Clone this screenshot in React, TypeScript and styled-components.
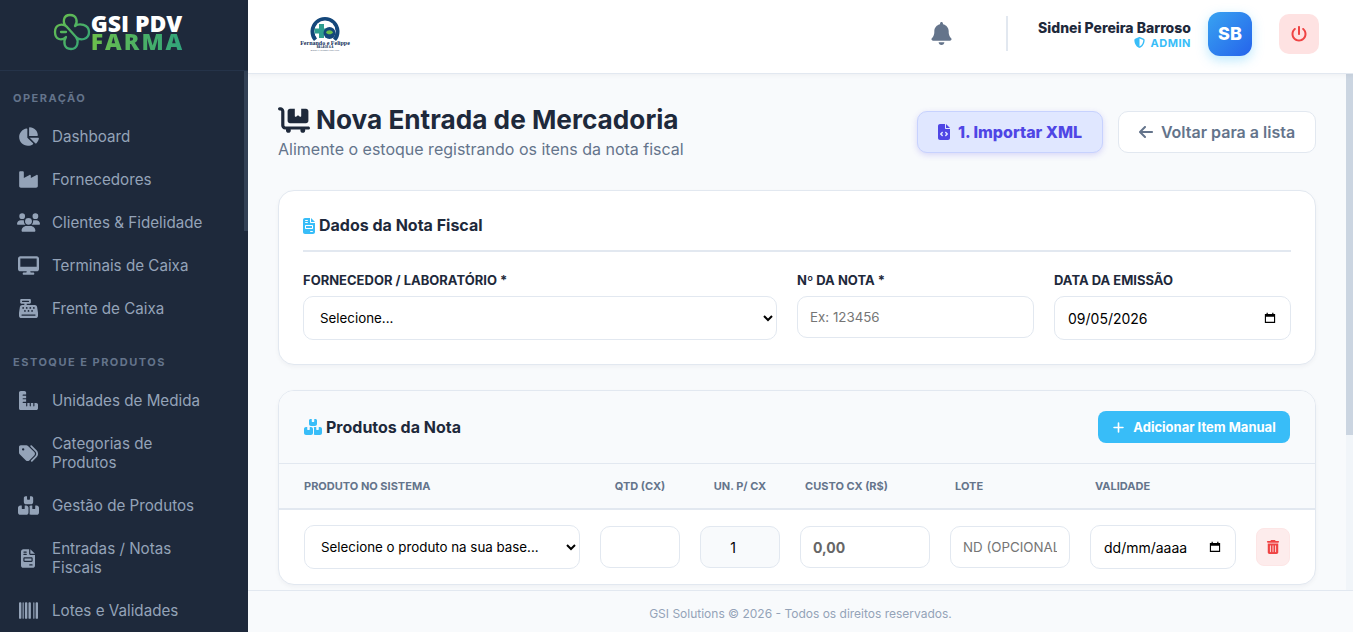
import React, { FC, ReactNode } from 'react'
import styled, { createGlobalStyle } from 'styled-components'
import {
	FaArrowLeft,
	FaBarcode,
	FaBell,
	FaBoxesStacked,
	FaCartFlatbed,
	FaCashRegister,
	FaChartPie,
	FaDesktop,
	FaFileCode,
	FaFileInvoice,
	FaIndustry,
	FaPlus,
	FaPowerOff,
	FaRulerCombined,
	FaShieldHalved,
	FaTags,
	FaTrashCan,
	FaUsers,
} from 'react-icons/fa6'

const GlobalStyle = createGlobalStyle`
	* { box-sizing: border-box; }
	html, body, #root { height: 100%; margin: 0; }
	body {
		font-family: 'Inter', 'Liberation Sans', sans-serif;
		background: #f8fafc;
		color: #1e293b;
		overflow: hidden;
	}
`

const Shell = styled.div`
	display: flex;
	height: 632px;
`

const Sidebar = styled.aside`
	width: 248px;
	flex-shrink: 0;
	background: #1e293b;
	display: flex;
	flex-direction: column;
`

const Brand = styled.div`
	height: 71px;
	flex-shrink: 0;
	border-bottom: 1px solid #253349;
	display: flex;
	align-items: center;
	justify-content: center;
	padding: 0 13px 6px 0;
`

const BrandText = styled.div`
	display: flex;
	flex-direction: column;
	align-items: flex-end;
	font-family: 'Open Sans', 'Inter', sans-serif;
	font-weight: 800;
	font-size: 23px;
	line-height: 18px;
	white-space: nowrap;
`

const BrandTop = styled.span`
	color: #fff;
`

const BrandBottom = styled.span`
	background: linear-gradient(90deg, #6cbf4b, #2fa37c);
	-webkit-background-clip: text;
	background-clip: text;
	color: transparent;
	letter-spacing: 2px;
	margin-right: -2px;
`

const SideBody = styled.div`
	position: relative;
	flex: 1;
	min-height: 0;
`

const SideNav = styled.nav`
	height: 100%;
	overflow: hidden;
	padding-top: 20px;
`

const SideThumb = styled.div`
	position: absolute;
	top: 0;
	right: 0;
	width: 4px;
	height: 160px;
	background: #334155;
`

const SectionLabel = styled.div<{ $spaced?: boolean }>`
	font-size: 11px;
	line-height: 14px;
	font-weight: 700;
	letter-spacing: 1.5px;
	color: #64748b;
	padding-left: 13px;
	margin-top: ${(p) => (p.$spaced ? '25px' : '0')};
	margin-bottom: 10px;
`

const NavItem = styled.a`
	display: flex;
	align-items: center;
	min-height: 43px;
	padding: 12px 34px 12px 18px;
	gap: 14px;
	font-size: 15.2px;
	line-height: 19px;
	color: #94a3b8;
`

const NavIcon = styled.span<{ $w: number }>`
	width: 20px;
	height: 19px;
	flex-shrink: 0;
	display: flex;
	align-items: center;
	justify-content: center;

	svg {
		flex-shrink: 0;
		width: ${(p) => p.$w}px;
		height: 19px;
	}
`

const Main = styled.div`
	flex: 1;
	min-width: 0;
	display: flex;
	flex-direction: column;
`

const TopBar = styled.header`
	position: relative;
	z-index: 1;
	height: 74px;
	flex-shrink: 0;
	background: #fff;
	border-bottom: 1px solid #e2e8f0;
	box-shadow: 0 1px 5px rgba(15, 23, 42, 0.05);
	display: flex;
	align-items: center;
	padding: 0 34px 6px 51px;
`

const TopRight = styled.div`
	margin-left: auto;
	display: flex;
	align-items: center;
`

const BellWrap = styled.span`
	display: flex;
	color: #64748b;
	font-size: 23px;
	margin-right: 53px;
`

const Divider = styled.span`
	width: 2px;
	height: 35px;
	background: #e2e8f0;
	margin-right: 30px;
`

const UserBlock = styled.div`
	display: flex;
	flex-direction: column;
	align-items: flex-end;
	margin-right: 17px;
	padding-top: 1px;
`

const UserName = styled.span`
	font-size: 14px;
	line-height: 17px;
	font-weight: 800;
	color: #1e293b;
`

const UserRole = styled.span`
	display: flex;
	align-items: center;
	gap: 6px;
	font-size: 11px;
	line-height: 14px;
	font-weight: 700;
	letter-spacing: 0.5px;
	color: #38bdf8;
`

const Avatar = styled.div`
	width: 44px;
	height: 44px;
	border-radius: 12px;
	background: linear-gradient(135deg, #38a3f1, #2563eb);
	box-shadow: 0 4px 12px rgba(56, 189, 248, 0.35);
	color: #fff;
	font-weight: 800;
	font-size: 18px;
	display: flex;
	align-items: center;
	justify-content: center;
	margin-right: 27px;
`

const PowerButton = styled.button`
	width: 40px;
	height: 40px;
	border: 0;
	border-radius: 10px;
	background: #fee2e2;
	color: #ef4444;
	font-size: 16px;
	display: flex;
	align-items: center;
	justify-content: center;
	padding: 0;
`

const ScrollArea = styled.div`
	position: relative;
	flex: 1;
	min-height: 0;
`

const Scroller = styled.main`
	height: 100%;
	overflow: hidden;
	padding: 30px 37px 0 30px;
`

const ScrollTrack = styled.div`
	position: absolute;
	top: 0;
	right: 0;
	bottom: 0;
	width: 7px;
	background: #f1f5f9;
`

const ScrollThumb = styled.div`
	height: 361px;
	background: #cbd5e1;
`

const PageHead = styled.div`
	display: flex;
	align-items: center;
	justify-content: space-between;
	margin-bottom: 31px;
`

const PageTitle = styled.h1`
	margin: 0;
	display: flex;
	align-items: center;
	gap: 6px;
	font-size: 26.2px;
	line-height: 32px;
	font-weight: 700;
	color: #1e293b;
`

const PageSub = styled.p`
	margin: 3px 0 0;
	font-size: 16px;
	line-height: 20px;
	color: #64748b;
`

const HeadActions = styled.div`
	display: flex;
	gap: 15px;
`

const ImportButton = styled.button`
	height: 42px;
	width: 186px;
	border: 1px solid #c7d2fe;
	border-radius: 10px;
	background: #e0e7ff;
	color: #4f46e5;
	font: 800 16px 'Inter', sans-serif;
	box-shadow: 0 2px 6px rgba(79, 70, 229, 0.2);
	display: flex;
	align-items: center;
	justify-content: center;
	gap: 8px;
`

const BackButton = styled.button`
	height: 42px;
	width: 198px;
	border: 1px solid #e2e8f0;
	border-radius: 10px;
	background: #fff;
	color: #64748b;
	font: 600 16px 'Inter', sans-serif;
	display: flex;
	align-items: center;
	justify-content: center;
	gap: 8px;
`

const ImportGlyph = styled(FaFileCode)`
	width: 12px;
	height: 16px;
`

const BackGlyph = styled(FaArrowLeft)`
	width: 14px;
	height: 16px;
`

const Card = styled.section<{ $flush?: boolean }>`
	background: #fff;
	border: 1px solid #e2e8f0;
	border-radius: 16px;
	box-shadow: 0 2px 4px rgba(15, 23, 42, 0.04);
	padding: ${(p) => (p.$flush ? '0' : '24px')};
	margin-bottom: 25px;
	overflow: hidden;
`

const CardTitle = styled.h2`
	margin: 0;
	display: flex;
	align-items: center;
	gap: 4px;
	font-size: 16px;
	line-height: 21px;
	font-weight: 700;
	color: #1e293b;
`

const NoteGlyph = styled(FaFileInvoice)`
	width: 12px;
	height: 16px;
	color: #38bdf8;
`

const BoxesGlyph = styled(FaBoxesStacked)`
	width: 18px;
	height: 16px;
	color: #38bdf8;
`

const TitleRule = styled.div`
	height: 2px;
	background: #e2e8f0;
	margin: 14px 0 20px;
`

const FormGrid = styled.div`
	display: grid;
	grid-template-columns: 2fr 1fr 1fr;
	gap: 20px;
	align-items: start;
`

const FieldLabel = styled.label`
	display: block;
	font-size: 13px;
	line-height: 17px;
	font-weight: 700;
	color: #1e293b;
	margin-bottom: 7px;
	text-transform: uppercase;
`

const controlBase = `
	width: 100%;
	height: 42px;
	border: 1px solid #e2e8f0;
	border-radius: 10px;
	background: #fff;
	font-family: 'Inter', sans-serif;
	font-size: 13.33px;
	color: #000;
	outline: none;
`

const SelectBox = styled.select`
	${controlBase}
	height: 44px;
	padding: 0 12px;
`

const TextInput = styled.input<{ $qty?: boolean; $strong?: boolean }>`
	${controlBase}
	padding: ${(p) => (p.$qty ? '0 27px 0 13px' : '0 12px')};
	text-align: ${(p) => (p.$qty ? 'center' : 'left')};
	font-weight: ${(p) => (p.$strong ? 700 : 400)};
	font-size: ${(p) => (p.$strong || p.$qty ? '14px' : '13.33px')};
	background: ${(p) => (p.$qty ? '#f8fafc' : '#fff')};
	color: ${(p) => (p.$strong ? '#666' : '#000')};

	&::placeholder { color: #757575; }
`

const DateBox = styled.div`
	${controlBase}
	height: 44px;
	padding: 0 14px 0 13px;
	font-size: 14px;
	display: flex;
	align-items: center;
	justify-content: space-between;
`

const ProductsHead = styled.div`
	background: #f8fafc;
	height: 73px;
	padding: 0 25px;
	border-bottom: 1px solid #e2e8f0;
	display: flex;
	align-items: center;
	justify-content: space-between;
`

const AddButton = styled.button`
	width: 192px;
	height: 32px;
	border: 0;
	border-radius: 8px;
	background: #38bdf8;
	color: #fff;
	font: 700 13px 'Inter', sans-serif;
	display: flex;
	align-items: center;
	justify-content: center;
	gap: 8px;
`

const rowColumns = '276px 80px 80px 130px 120px 146px 34px'

const TableHead = styled.div`
	display: grid;
	grid-template-columns: ${rowColumns};
	column-gap: 20px;
	align-items: center;
	height: 46px;
	padding: 0 25px;
	background: #f8fafc;
	border-bottom: 2px solid #e2e8f0;
`

const HeadCell = styled.span<{ $align?: 'center' | 'pad' }>`
	font-size: 11px;
	font-weight: 700;
	color: #64748b;
	text-transform: uppercase;
	text-align: ${(p) => (p.$align === 'center' ? 'center' : 'left')};
	padding-left: ${(p) => (p.$align === 'pad' ? '5px' : '0')};
	white-space: nowrap;
`

const TableRow = styled.div`
	display: grid;
	grid-template-columns: ${rowColumns};
	column-gap: 20px;
	align-items: center;
	padding: 15px 25px;
`

const TrashButton = styled.button`
	width: 34px;
	height: 38px;
	border: 1px solid #fde6e6;
	border-radius: 8px;
	background: #fdecec;
	color: #ef4444;
	font-size: 14px;
	display: flex;
	align-items: center;
	justify-content: center;
	padding: 0;
`

const Footer = styled.footer`
	position: relative;
	z-index: 1;
	height: 42px;
	flex-shrink: 0;
	background: #f8fafc;
	border-top: 1px solid #e2e8f0;
	display: flex;
	align-items: center;
	justify-content: center;
	padding-top: 3px;
	font-size: 12px;
	color: #94a3b8;
`

const CalendarGlyph: FC = () => (
	<svg width='12' height='12' viewBox='0 0 14 14'>
		<path fill='#000' d='M1 2.2h2V1h1.4v1.2h5.2V1H11v1.2h2v10.6H1zM2.3 5.4v6.1h9.4V5.4z' />
	</svg>
)

const BrandMark: FC = () => (
	<svg width='38' height='38' viewBox='0 0 38 38' fill='none' strokeWidth='2.3' strokeLinecap='round' strokeLinejoin='round'>
		<defs>
			<linearGradient id='knot' x1='0' y1='0' x2='1' y2='1'>
				<stop offset='0' stopColor='#6cbf4b' />
				<stop offset='1' stopColor='#2fa37c' />
			</linearGradient>
		</defs>
		<path
			stroke='url(#knot)'
			d='M14 14C9 10 10 2 17 2s8 7 5 11c4-3 14-2 14 6s-9 9-13 5c3 4 2 12-5 12s-8-7-5-12c-4 4-11 3-11-5s8-9 12-5l9 10M13 19H8'
		/>
	</svg>
)

const ClientLogo: FC = () => (
	<svg width='52' height='40' viewBox='0 0 52 40'>
		<path fill='#14477a' d='M15 27a14.5 14.5 0 1 1 22 0l-3-2.4a10.5 10.5 0 1 0-16 0z' />
		<circle cx='26' cy='17' r='10.5' fill='#fff' />
		<path fill='#2f9e8f' d='M15.5 14.5h4.5V10h5v4.5h4.5v5H25V24h-5v-4.5h-4.5z' />
		<circle cx='30.5' cy='19' r='6' fill='#14477a' />
		<path fill='#6cbf4b' d='M27 18.5c1.2-3 5.6-3 7 0-1.4 2.4-5.8 2.4-7 0z' />
		<text x='26' y='31' textAnchor='middle' fontFamily="'Liberation Serif', serif" fontWeight='700' fontSize='6' fill='#14315a'>
			Fernando e Felippe
		</text>
		<text x='26' y='34' textAnchor='middle' fontFamily="'Liberation Sans', sans-serif" fontWeight='700' fontSize='2.6' fill='#14315a'>
			BA LAGE &amp; A
		</text>
		<text x='26' y='37' textAnchor='middle' fontFamily="'Liberation Sans', sans-serif" fontSize='2.4' fill='#5b6b80'>
			Saúde e cuidado com você
		</text>
	</svg>
)

const Item: FC<{ icon: ReactNode; w?: number; children: ReactNode }> = ({ icon, w = 21, children }) => (
	<NavItem>
		<NavIcon $w={w}>{icon}</NavIcon>
		<span>{children}</span>
	</NavItem>
)

const App: FC = () => (
	<>
		<GlobalStyle />
		<Shell>
			<Sidebar>
				<Brand>
					<BrandMark />
					<BrandText>
						<BrandTop>GSI PDV</BrandTop>
						<BrandBottom>FARMA</BrandBottom>
					</BrandText>
				</Brand>
				<SideBody>
					<SideNav>
						<SectionLabel>OPERAÇÃO</SectionLabel>
						<Item icon={<FaChartPie />}>Dashboard</Item>
						<Item icon={<FaIndustry />}>Fornecedores</Item>
						<Item icon={<FaUsers />} w={23}>
							Clientes &amp; Fidelidade
						</Item>
						<Item icon={<FaDesktop />}>Terminais de Caixa</Item>
						<Item icon={<FaCashRegister />} w={19}>
							Frente de Caixa
						</Item>
						<SectionLabel $spaced>ESTOQUE E PRODUTOS</SectionLabel>
						<Item icon={<FaRulerCombined />} w={19}>
							Unidades de Medida
						</Item>
						<Item icon={<FaTags />} w={19}>
							Categorias de Produtos
						</Item>
						<Item icon={<FaBoxesStacked />}>Gestão de Produtos</Item>
						<Item icon={<FaFileInvoice />} w={14}>
							Entradas / Notas Fiscais
						</Item>
						<Item icon={<FaBarcode />} w={19}>
							Lotes e Validades
						</Item>
					</SideNav>
					<SideThumb />
				</SideBody>
			</Sidebar>
			<Main>
				<TopBar>
					<ClientLogo />
					<TopRight>
						<BellWrap>
							<FaBell />
						</BellWrap>
						<Divider />
						<UserBlock>
							<UserName>Sidnei Pereira Barroso</UserName>
							<UserRole>
								<FaShieldHalved size={11} />
								ADMIN
							</UserRole>
						</UserBlock>
						<Avatar>SB</Avatar>
						<PowerButton>
							<FaPowerOff />
						</PowerButton>
					</TopRight>
				</TopBar>
				<ScrollArea>
					<Scroller>
						<PageHead>
							<div>
								<PageTitle>
									<FaCartFlatbed size={32} />
									Nova Entrada de Mercadoria
								</PageTitle>
								<PageSub>Alimente o estoque registrando os itens da nota fiscal</PageSub>
							</div>
							<HeadActions>
								<ImportButton>
									<ImportGlyph />
									1. Importar XML
								</ImportButton>
								<BackButton>
									<BackGlyph />
									Voltar para a lista
								</BackButton>
							</HeadActions>
						</PageHead>

						<Card>
							<CardTitle>
								<NoteGlyph />
								Dados da Nota Fiscal
							</CardTitle>
							<TitleRule />
							<FormGrid>
								<div>
									<FieldLabel>Fornecedor / Laboratório *</FieldLabel>
									<SelectBox>
										<option>Selecione...</option>
									</SelectBox>
								</div>
								<div>
									<FieldLabel>Nº da Nota *</FieldLabel>
									<TextInput placeholder='Ex: 123456' />
								</div>
								<div>
									<FieldLabel>Data da Emissão</FieldLabel>
									<DateBox>
										09/05/2026
										<CalendarGlyph />
									</DateBox>
								</div>
							</FormGrid>
						</Card>

						<Card $flush>
							<ProductsHead>
								<CardTitle>
									<BoxesGlyph />
									Produtos da Nota
								</CardTitle>
								<AddButton>
									<FaPlus size={13} />
									Adicionar Item Manual
								</AddButton>
							</ProductsHead>
							<TableHead>
								<HeadCell>Produto no Sistema</HeadCell>
								<HeadCell $align='center'>Qtd (CX)</HeadCell>
								<HeadCell $align='center'>Un. p/ CX</HeadCell>
								<HeadCell $align='pad'>Custo CX (R$)</HeadCell>
								<HeadCell $align='pad'>Lote</HeadCell>
								<HeadCell $align='pad'>Validade</HeadCell>
								<span />
							</TableHead>
							<TableRow>
								<SelectBox>
									<option>Selecione o produto na sua base...</option>
								</SelectBox>
								<TextInput />
								<TextInput $qty defaultValue='1' />
								<TextInput $strong defaultValue='0,00' />
								<TextInput placeholder='ND (OPCIONAL)' />
								<DateBox>
									dd/mm/aaaa
									<CalendarGlyph />
								</DateBox>
								<TrashButton>
									<FaTrashCan />
								</TrashButton>
							</TableRow>
						</Card>
					</Scroller>
					<ScrollTrack>
						<ScrollThumb />
					</ScrollTrack>
				</ScrollArea>
				<Footer>GSI Solutions © 2026 - Todos os direitos reservados.</Footer>
			</Main>
		</Shell>
	</>
)

export default App
